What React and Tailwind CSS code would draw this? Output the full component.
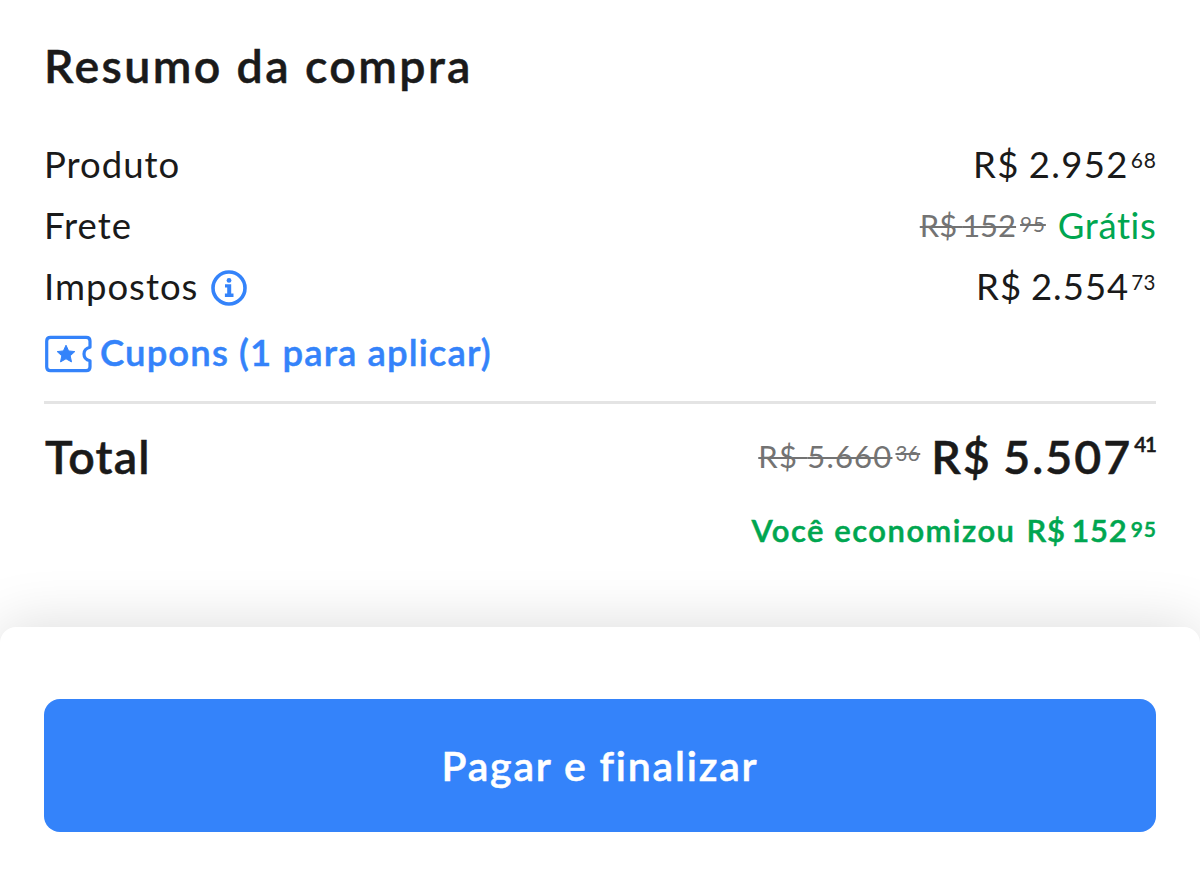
import clsx from "clsx";

/** Semibold with a hairline outline, sits between Lato's semibold and bold. */
const strongClass = "font-semibold [-webkit-text-stroke:0.5px_currentColor]";

const InfoIcon = () => (
  <svg viewBox="0 0 36 36" className="mt-0.5 ml-[13px] size-9 shrink-0" aria-hidden>
    <circle cx="18" cy="18" r="16" fill="none" stroke="#3483fa" strokeWidth="3.6" />
    <circle cx="18" cy="10.4" r="2.4" fill="#3483fa" />
    <path d="M14 14.3h6.2v9.3h2.3v3.4h-8.6v-3.4h2.3v-6h-2.2z" fill="#3483fa" />
  </svg>
);

const CouponIcon = () => (
  <svg viewBox="0 0 48 38" className="h-[38px] w-12 shrink-0" aria-hidden>
    <path
      d="M6.5 2.3H42.2Q46 2.3 46 6V12.2C42.4 13 40 15.7 40 19S42.4 25 46 25.8V32Q46 35.7 42.2 35.7H6.5Q2.7 35.7 2.7 32V6Q2.7 2.3 6.5 2.3Z"
      fill="none"
      stroke="#3483fa"
      strokeWidth="3.2"
      strokeLinejoin="round"
    />
    <path
      d="M22 10.2l2.6 5.7 6.2.7-4.6 4.2 1.3 6.1-5.5-3.1-5.5 3.1 1.3-6.1-4.6-4.2 6.2-.7z"
      fill="#3483fa"
      stroke="#3483fa"
      strokeLinejoin="round"
    />
  </svg>
);

const Price = ({ value, cents, className, centsClass, struck }) => (
  <span className={clsx("flex whitespace-nowrap", className)}>
    <span className={clsx(struck && "line-through decoration-2")}>R$ {value}</span>
    <span className={clsx(struck && "line-through decoration-2", centsClass)}>
      {cents}
    </span>
  </span>
);

const Row = ({ label, icon, children }) => (
  <div className="flex h-[61px] items-center justify-between leading-[61px]">
    <div className="flex items-center">
      <span className="tracking-[1px]">{label}</span>
      {icon}
    </div>
    <div className="flex">{children}</div>
  </div>
);

export default function App() {
  return (
    <div className="flex h-[883px] w-[1200px] flex-col overflow-hidden bg-white font-['Lato',sans-serif] text-[#1a1a1a]">
      <main className="flex h-[627px] shrink-0 flex-col px-11">
        <h1
          className={clsx(
            "mt-[35px] h-[60px] text-[46.5px] leading-[60px] tracking-[2.4px]",
            strongClass,
          )}
        >
          Resumo da compra
        </h1>

        <section className="mt-[39px] text-[36.5px]">
          <Row label="Produto">
            <Price
              value="2.952"
              cents="68"
              className="tracking-[1.3px] [word-spacing:-1.5px]"
              centsClass="-mr-px ml-0.5 text-[21px] leading-[52px] tracking-[1px]"
            />
          </Row>
          <Row label="Frete">
            <Price
              value="152"
              cents="95"
              struck
              className="mr-3 text-[31px] leading-[61px] text-[#737373] [word-spacing:-3px]"
              centsClass="ml-1 text-[20.5px] leading-[59px] tracking-[1px]"
            />
            <span className="-mr-[0.4px] tracking-[0.6px] text-[#00a650]">Grátis</span>
          </Row>
          <Row label="Impostos" icon={<InfoIcon />}>
            <Price
              value="2.554"
              cents="73"
              className="tracking-[1px] [word-spacing:-1.5px]"
              centsClass="ml-0.5 text-[20.5px] leading-[52px] tracking-[0.5px]"
            />
          </Row>
        </section>

        <a
          className={clsx(
            "flex h-[74px] items-center gap-2 text-[36.5px] leading-[68px] tracking-[1.1px] text-[#3483fa]",
            strongClass,
          )}
        >
          <CouponIcon />
          <span className="-mt-[5px]">Cupons (1 para aplicar)</span>
        </a>

        <section className="mt-2.5 border-t-[3px] border-[#e4e4e4]">
          <div className="flex h-[104px] justify-between leading-[104px]">
            <span className={clsx("ml-px text-[46.5px] tracking-[1.2px]", strongClass)}>
              Total
            </span>
            <div className="flex">
              <Price
                value="5.660"
                cents="36"
                struck
                className="mr-[11px] text-[31px] tracking-[1.2px] text-[#737373]"
                centsClass="ml-[3px] text-[20.5px] leading-[99px] tracking-[0.5px]"
              />
              <Price
                value="5.507"
                cents="41"
                className={clsx("text-[46.5px] tracking-[2px] [word-spacing:-2px]", strongClass)}
                centsClass="ml-0.5 text-[20.5px] leading-[81px] tracking-[-1px]"
              />
            </div>
          </div>
          <div
            className={clsx(
              "-mt-[3px] flex h-[50px] justify-end gap-[11px] text-[31px] leading-[50px] text-[#00a650]",
              strongClass,
            )}
          >
            <span className="tracking-[1.5px]">Você economizou</span>
            <Price
              value="152"
              cents="95"
              className="tracking-[0.8px] [word-spacing:-3px]"
              centsClass="-mr-px ml-[3px] text-[21px] leading-[48px] tracking-[1px]"
            />
          </div>
        </section>
      </main>

      <footer className="h-64 shrink-0 rounded-t-2xl bg-white px-11 pt-[72px] shadow-[0_0_60px_rgba(0,0,0,0.15)]">
        <button
          type="button"
          className={clsx(
            "h-[133px] w-full rounded-2xl bg-[#3483fa] pt-px text-[41px] tracking-[1.8px] text-white",
            strongClass,
          )}
        >
          Pagar e finalizar
        </button>
      </footer>
    </div>
  );
}
